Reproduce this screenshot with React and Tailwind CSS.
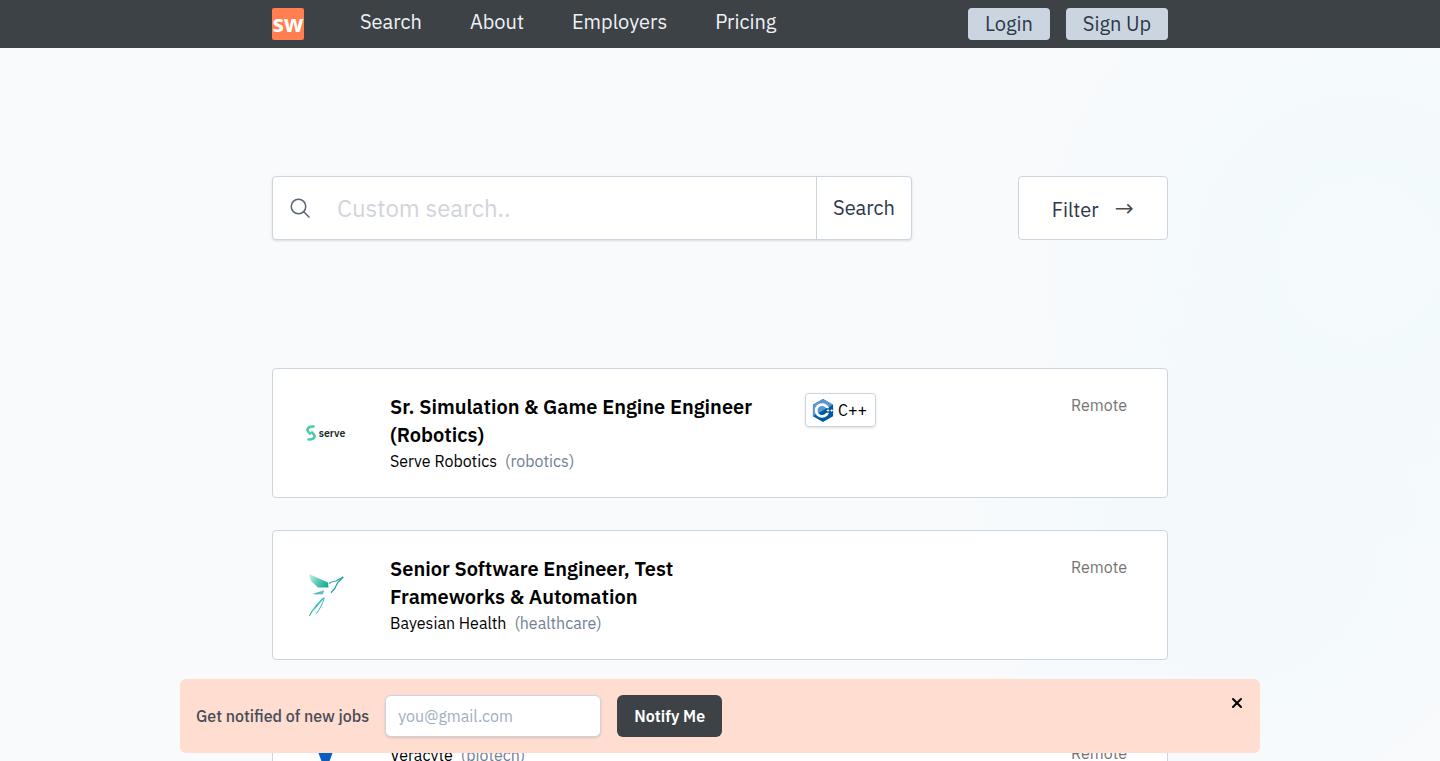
import React from "react";
import { X } from "lucide-react";

const font = "font-['IBM_Plex_Sans','Noto_Sans','Open_Sans',sans-serif]";

const SearchIcon = () => (
  <svg className="ml-[17px] shrink-0" width="20" height="20" viewBox="0 0 20 20" fill="none" stroke="#5a6478" strokeWidth="1.500">
    <circle cx="8.500" cy="8.500" r="7.250" />
    <path d="M13.800 13.800 19.500 19.500" />
  </svg>
);

const CppIcon = () => (
  <svg width="22" height="25" viewBox="0 0 24 26" className="shrink-0">
    <path d="M12 0.500 23 6.750V19.250L12 25.500 1 19.250V6.750Z" fill="#00599c" />
    <path d="M12 0.500 23 6.750 12 13 1 19.250V6.750Z" fill="#5d97d1" />
    <circle cx="11" cy="13" r="6.500" fill="none" stroke="#fff" strokeWidth="3" />
    <path d="M15 10.500h8v5h-8z" fill="#00599c" />
    <path d="M16 13h3M17.500 11.500v3M20 13h3M21.500 11.500v3" stroke="#fff" strokeWidth="0.900" />
  </svg>
);

const ServeLogo = () => (
  <div className="flex items-center gap-[3px]">
    <svg width="10" height="16" viewBox="0 0 10 16" fill="none" stroke="#47cba8" strokeWidth="2.600" strokeLinecap="round">
      <path d="M7.500 1.500C3.500 1.200 1.300 3 1.400 5 1.500 6.500 3 7.500 4 8.500" />
      <path d="M2.500 14.500C6.500 14.800 8.700 13 8.600 11 8.500 9.500 7 8.500 6 7.500" />
    </svg>
    <span className="text-[10.500px] leading-none font-semibold text-[#1c2a2a]">serve</span>
  </div>
);

const BirdLogo = () => (
  <svg width="38" height="44" viewBox="0 0 38 44" fill="none">
    <defs>
      <linearGradient id="wing" x1="2" y1="1" x2="21" y2="13" gradientUnits="userSpaceOnUse">
        <stop offset="0" stopColor="#2fbfa8" stopOpacity="0.250" />
        <stop offset="0.600" stopColor="#1fb39c" stopOpacity="0.800" />
        <stop offset="1" stopColor="#12a890" />
      </linearGradient>
    </defs>
    <path d="M2 1 21 9.500 21.500 14.500 11 14.500 4 8Z" fill="url(#wing)" />
    <path d="M5.700 20.700 17.300 17.300 15.700 21.300 9 21.500Z" fill="#5fb6c8" />
    <path d="M22 10.500C24.500 8.500 27 8.200 29 8L36.300 4 30.700 9.700C29 14 27 17 24 19.700" stroke="#1fa3a1" strokeWidth="1.200" />
    <path d="M16.700 24.700C11 30 6 36 2.300 43" stroke="#35bdb9" strokeWidth="1.200" />
    <path d="M15.700 26.300C13 29.500 10 33 7.300 36.300" stroke="#35bdb9" strokeWidth="1" />
    <path d="M17.300 24.700C16 30 13 36 9 41" stroke="#35bdb9" strokeWidth="1" />
  </svg>
);

const VeracyteLogo = () => (
  <svg width="17" height="23" viewBox="0 0 17 23">
    <path d="M0 0H17L8.500 23Z" fill="#0a5cc0" />
  </svg>
);

const jobs = [
  {
    title: "Sr. Simulation & Game Engine Engineer (Robotics)",
    company: "Serve Robotics",
    sector: "(robotics)",
    logo: <ServeLogo />,
    tech: true,
  },
  {
    title: "Senior Software Engineer, Test Frameworks & Automation",
    company: "Bayesian Health",
    sector: "(healthcare)",
    logo: <BirdLogo />,
  },
];

const JobCard = ({ title, company, sector, logo, tech }) => (
  <div className="flex h-[130px] rounded border border-[#cbd5e0] bg-white">
    <div className="flex w-[117px] shrink-0 items-center justify-center pr-[12px]">{logo}</div>
    <div className="w-[384px] shrink-0 pt-[24px] pr-[10px]">
      <h2 className="text-[20px] leading-[28px] font-semibold text-black">{title}</h2>
      <p className="leading-[24px] text-black">
        {company}
        <span className="ml-2 text-[#718096]">{sector}</span>
      </p>
    </div>
    <div className="flex-1 pt-[24px] pl-[31px]">
      {tech && (
        <span className="flex h-[34px] w-[71px] items-center gap-[4px] rounded border border-[#cbd5e0] pl-[6px] text-[16px] text-black shadow-sm">
          <CppIcon />
          C++
        </span>
      )}
    </div>
    <div className="w-[96px] shrink-0 pt-[24px] text-[#757575]">Remote</div>
  </div>
);

export default function App() {
  return (
    <div
      className={`${font} min-h-[761px] bg-[#f8fafc] bg-[radial-gradient(circle_at_1360px_260px,#f5fbfc_0,#f5fbfc_70px,#f3fafc_90px,transparent_340px),radial-gradient(circle_at_1240px_540px,#f4fafc_0,#f4fafc_120px,transparent_280px)]`}
    >
      <nav className="h-12 bg-[#3d4246]">
        <div className="mx-auto flex h-full w-[896px] items-center">
          <div className="mb-[1px] flex h-8 w-8 items-center justify-center rounded-[2px] bg-[#ff7f50] font-['Open_Sans',sans-serif] text-[23px] leading-none font-bold text-white">
            sw
          </div>
          <div className="mb-1 ml-14 flex gap-12 text-[20px] text-[#edf2f7]">
            <a>Search</a>
            <a>About</a>
            <a>Employers</a>
            <a>Pricing</a>
          </div>
          <div className="ml-auto flex gap-4 text-[20px] text-[#2d3748]">
            <button className="h-8 w-[82px] rounded bg-[#cbd5e0]">Login</button>
            <button className="h-8 w-[102px] rounded bg-[#cbd5e0]">Sign Up</button>
          </div>
        </div>
      </nav>

      <main className="mx-auto w-[896px]">
        <div className="flex justify-between pt-32">
          <div className="flex h-16 w-[640px] items-center rounded border border-[#cbd5e0] bg-white shadow-sm">
            <SearchIcon />
            <input
              className="ml-[27px] min-w-0 flex-1 text-[24px] text-[#2d3748] outline-none placeholder:text-[#d1d5db]"
              placeholder="Custom search.."
            />
            <button className="h-full w-[95px] border-l border-[#cbd5e0] text-[20px] text-[#2d3748]">
              Search
            </button>
          </div>
          <button className="flex h-16 w-[150px] items-center justify-center rounded border border-[#cbd5e0] bg-white text-[20px] text-[#2d3748]">
            <span className="pt-1">Filter</span>
            <span className="ml-4 text-[24px] leading-none text-[#4a4a4a]">→</span>
          </button>
        </div>

        <div className="mt-32 flex flex-col gap-8 pb-8">
          {jobs.map((job) => (
            <JobCard key={job.company} {...job} />
          ))}
          <div className="flex h-[130px] rounded border border-[#cbd5e0] bg-white">
            <div className="flex w-[117px] shrink-0 items-start justify-center pt-[56px] pr-[12px]">
              <VeracyteLogo />
            </div>
            <div className="flex-1 pt-[50px] leading-[24px] text-black">
              Veracyte
              <span className="ml-2 text-[#718096]">(biotech)</span>
            </div>
            <div className="w-[96px] shrink-0 pt-[48px] text-[#757575]">Remote</div>
          </div>
        </div>
      </main>

      <div className="fixed bottom-2 left-1/2 flex h-[74px] w-[1080px] -translate-x-1/2 items-center rounded-md bg-[#ffddd0] pl-4">
        <span className="font-medium text-[#454c5a]">Get notified of new jobs</span>
        <input
          className="ml-4 h-[42px] w-[216px] rounded-md border border-[#cbd5e0] bg-white px-3 text-[#2d3748] shadow-sm outline-none placeholder:text-[#a0aec0]"
          placeholder="you@gmail.com"
        />
        <button className="ml-4 h-[42px] w-[105px] rounded-md bg-[#3d4246] font-semibold text-white">
          Notify Me
        </button>
        <button className="absolute top-4 right-[15px] text-black">
          <X className="h-[16px] w-[16px]" strokeWidth={3} />
        </button>
      </div>
    </div>
  );
}
